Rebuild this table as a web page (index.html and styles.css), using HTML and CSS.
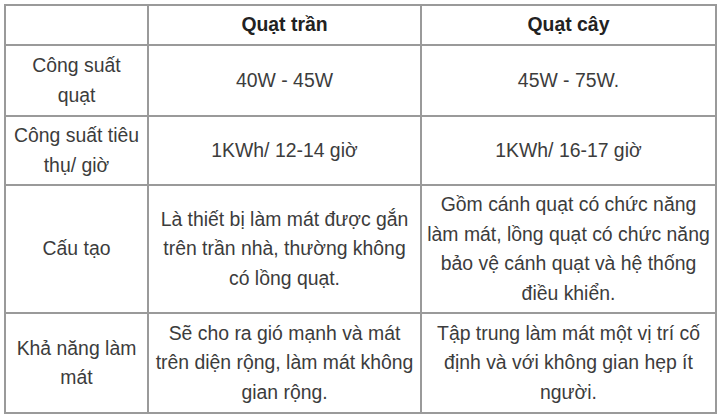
FILE: index.html
```html
<!DOCTYPE html>
<html lang="vi">
<head>
<meta charset="utf-8">
<link rel="stylesheet" href="styles.css">
</head>
<body>
<table class="cmp">
  <colgroup>
    <col class="c1"><col class="c2"><col class="c3">
  </colgroup>
  <tr class="r-head">
    <th></th>
    <th>Quạt trần</th>
    <th>Quạt cây</th>
  </tr>
  <tr class="r1">
    <td>Công suất<br>quạt</td>
    <td>40W - 45W</td>
    <td>45W - 75W.</td>
  </tr>
  <tr class="r2">
    <td>Công suất tiêu<br>thụ/ giờ</td>
    <td>1KWh/ 12-14 giờ</td>
    <td>1KWh/ 16-17 giờ</td>
  </tr>
  <tr class="r3">
    <td>Cấu tạo</td>
    <td>Là thiết bị làm mát được gắn<br>trên trần nhà, thường không<br>có lồng quạt.</td>
    <td>Gồm cánh quạt có chức năng<br>làm mát, lồng quạt có chức năng<br>bảo vệ cánh quạt và hệ thống<br>điều khiển.</td>
  </tr>
  <tr class="r4">
    <td>Khả năng làm<br>mát</td>
    <td>Sẽ cho ra gió mạnh và mát<br>trên diện rộng, làm mát không<br>gian rộng.</td>
    <td>Tập trung làm mát một vị trí cố<br>định và với không gian hẹp ít<br>người.</td>
  </tr>
</table>
</body>
</html>
```
FILE: styles.css
```css
html, body {
  margin: 0;
  background: #ffffff;
}
body {
  padding: 4px 0 0 4px;
  font-family: "Liberation Sans", Arial, sans-serif;
  font-size: 19.4px;
  color: #3c3c3c;
}
.cmp {
  border-collapse: collapse;
  table-layout: fixed;
  width: 711px;
}
.c1 { width: 143px; }
.c2 { width: 273px; }
.c3 { width: 295px; }
.cmp th, .cmp td {
  border: 2px solid #9a9a9a;
  text-align: center;
  vertical-align: middle;
  line-height: 29.5px;
  padding: 0 2px;
  white-space: nowrap;
}
.cmp th {
  font-weight: bold;
  color: #222222;
}
.r-head { height: 40px; }
.r1 { height: 71px; }
.r2 { height: 69px; }
.r3 { height: 128px; }
.r4 { height: 100px; }
```
